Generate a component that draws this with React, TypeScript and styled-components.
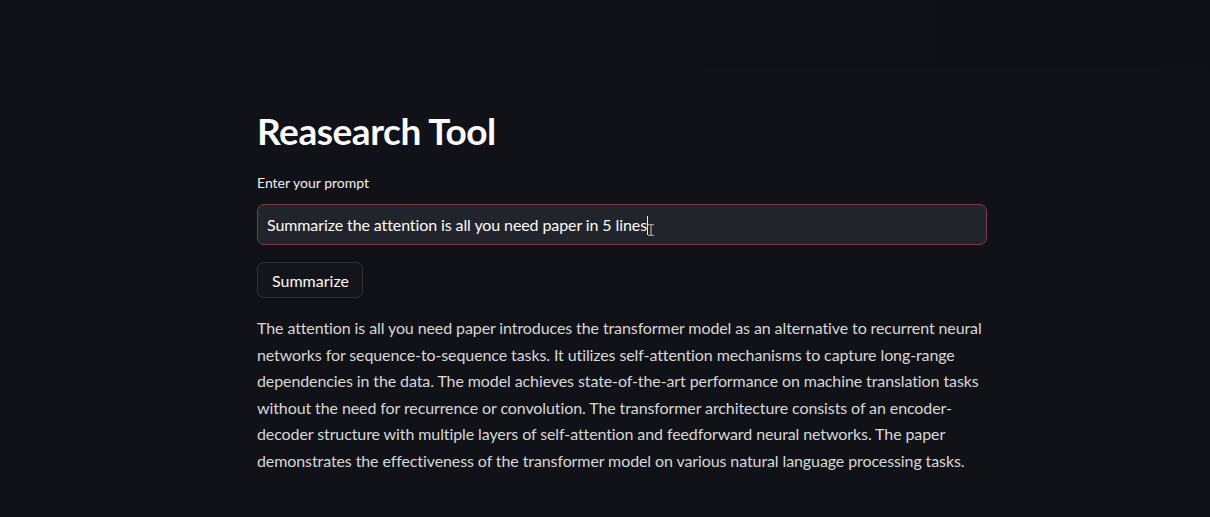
import React from "react";
import styled, { createGlobalStyle } from "styled-components";

const Global = createGlobalStyle`
  html, body { margin: 0; padding: 0; background: #111217; }
  body { font-family: "Source Sans Pro", Lato, "Noto Sans", sans-serif; }
  * { box-sizing: border-box; }
`;

const Page = styled.div`
  width: 1210px;
  height: 517px;
  overflow: hidden;
  background: #111217;
  display: flex;
  flex-direction: column;
`;

const Header = styled.header`
  height: 70px;
  flex: none;
  background: linear-gradient(90deg, #101116 0%, #101116 55%, #0e1018 100%);
`;

const Main = styled.main`
  width: 730px;
  margin-left: 257px;
  padding-top: 39px;
  display: flex;
  flex-direction: column;
`;

const Title = styled.h1`
  margin: 0;
  font-family: Lato, sans-serif;
  font-weight: 700;
  font-size: 37px;
  line-height: 44px;
  color: #fafafa;
  letter-spacing: -0.45px;
`;

const Label = styled.label`
  margin-top: 21px;
  font-family: Lato, sans-serif;
  font-size: 14px;
  line-height: 18px;
  color: #f0f0f0;
`;

const InputBox = styled.div`
  margin-top: 12px;
  height: 41px;
  border: 1px solid #7d3a47;
  border-radius: 7px;
  background: #22242c;
  display: flex;
  align-items: center;
  padding-left: 9px;
  position: relative;
`;

const InputText = styled.span`
  font-family: Lato, sans-serif;
  font-size: 16px;
  color: #fafafa;
  letter-spacing: -0.1px;
`;

const Caret = styled.span`
  display: inline-block;
  width: 1px;
  height: 19px;
  background: #e8e8e8;
  vertical-align: -4px;
`;

const Cursor = styled.svg`
  position: absolute;
  left: 390px;
  top: 19px;
`;

const Button = styled.button`
  margin-top: 17px;
  align-self: flex-start;
  height: 36px;
  padding: 0 13px 0 14px;
  border: 1px solid #2f313a;
  border-radius: 7px;
  background: #14151b;
  color: #fafafa;
  font-family: Lato, sans-serif;
  font-size: 16px;
`;

const Paragraph = styled.p`
  margin: 17px 0 0;
  font-family: Lato, sans-serif;
  font-size: 16px;
  line-height: 26.5px;
  color: #d8d8d8;
  letter-spacing: -0.1px;
`;

const Line = styled.span`
  display: block;
  white-space: nowrap;
`;

const lines = [
  "The attention is all you need paper introduces the transformer model as an alternative to recurrent neural",
  "networks for sequence-to-sequence tasks. It utilizes self-attention mechanisms to capture long-range",
  "dependencies in the data. The model achieves state-of-the-art performance on machine translation tasks",
  "without the need for recurrence or convolution. The transformer architecture consists of an encoder-",
  "decoder structure with multiple layers of self-attention and feedforward neural networks. The paper",
  "demonstrates the effectiveness of the transformer model on various natural language processing tasks.",
];

export default function App() {
  return (
    <Page>
      <Global />
      <Header />
      <Main>
        <Title>Reasearch Tool</Title>
        <Label>Enter your prompt</Label>
        <InputBox>
          <InputText>
            Summarize the attention is all you need paper in 5 lines
            <Caret />
          </InputText>
          <Cursor width="6" height="12" viewBox="0 0 6 12">
            <path d="M0 0.5h6M3 0.5v11M0 11.5h6" stroke="#9a9a9a" strokeWidth="1.4" fill="none" />
          </Cursor>
        </InputBox>
        <Button>Summarize</Button>
        <Paragraph>
          {lines.map((l) => (
            <Line key={l}>{l}</Line>
          ))}
        </Paragraph>
      </Main>
    </Page>
  );
}
